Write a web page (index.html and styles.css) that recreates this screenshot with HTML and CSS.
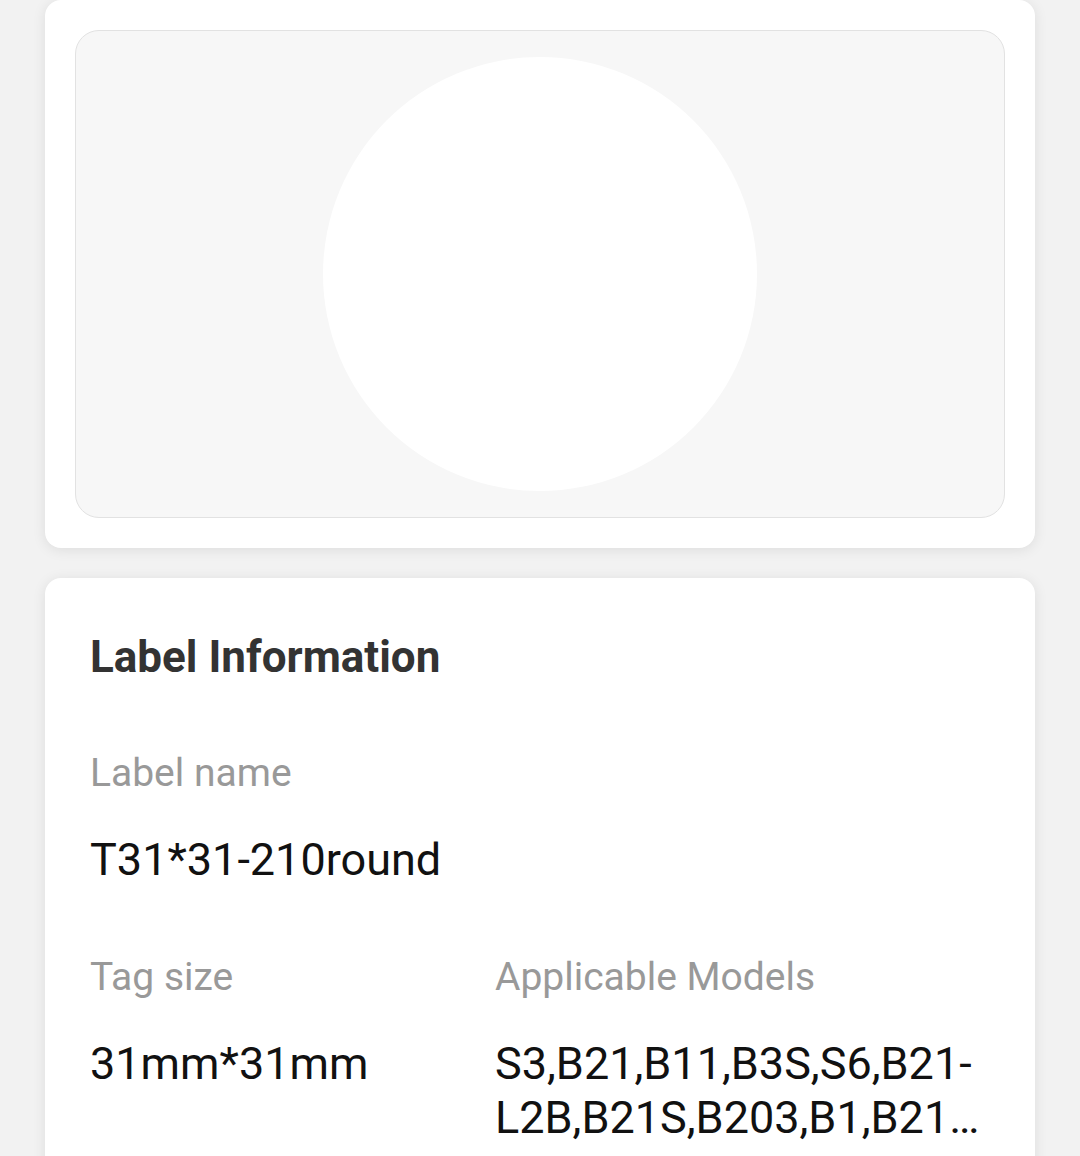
FILE: index.html
```html
<!DOCTYPE html>
<html lang="en">
<head>
    <meta charset="UTF-8">
    <meta name="viewport" content="width=device-width, initial-scale=1.0">
    <title>Label Details</title>
    <link rel="stylesheet" href="styles.css">
</head>
<body>

    <div class="card preview_card">
        <div class="preview_panel">
            <div class="label_shape"></div>
        </div>
    </div>

    <div class="card info_card">
        <h2 class="info_title">Label Information</h2>

        <div class="field">
            <p class="field_label">Label name</p>
            <p class="field_value">T31*31-210round</p>
        </div>

        <div class="field_row">
            <div class="field field_size">
                <p class="field_label">Tag size</p>
                <p class="field_value">31mm*31mm</p>
            </div>
            <div class="field field_models">
                <p class="field_label">Applicable Models</p>
                <p class="field_value clamp_2">S3,B21,B11,B3S,S6,B21-L2B,B21S,B203,B1,B21C2B,B3S_P,B1 Pro</p>
            </div>
        </div>
    </div>

</body>
</html>
```

FILE: styles.css
```css
:root {
    --page-bg: #f2f2f2;
    --panel-bg: #f7f7f7;
    --panel-border: #e2e2e2;
    --title-color: #333333;
    --label-color: #999999;
    --value-color: #111111;
}

body {
    font-family: Roboto, "Noto Sans", Arial, sans-serif;
    background-color: var(--page-bg);
    margin: 0;
    padding: 0 45px;
    height: 1156px;
    overflow: hidden;
}

.card {
    background: white;
    border-radius: 16px;
    box-shadow: 0 2px 14px rgba(0, 0, 0, 0.09);
}

.preview_card {
    padding: 30px;
}

.preview_panel {
    height: 486px;
    background: var(--panel-bg);
    border: 1px solid var(--panel-border);
    border-radius: 24px;
    display: flex;
    align-items: center;
    justify-content: center;
}

.label_shape {
    width: 434px;
    height: 434px;
    border-radius: 50%;
    background: white;
}

.info_card {
    margin-top: 30px;
    padding: 53px 45px 60px 45px;
}

.info_title {
    margin: 0;
    font-size: 44px;
    line-height: 52px;
    font-weight: 700;
    color: var(--title-color);
}

.field {
    margin-top: 67px;
}

.field_label {
    margin: 0;
    font-size: 39px;
    line-height: 46px;
    color: var(--label-color);
}

.field_value {
    margin: 37px 0 0 0;
    font-size: 45px;
    line-height: 54px;
    color: var(--value-color);
}

.field_row {
    display: flex;
}

.field_size {
    width: 405px;
    flex-shrink: 0;
}

.field_models {
    flex: 1;
    min-width: 0;
}

.clamp_2 {
    display: -webkit-box;
    -webkit-line-clamp: 2;
    -webkit-box-orient: vertical;
    overflow: hidden;
}
```
